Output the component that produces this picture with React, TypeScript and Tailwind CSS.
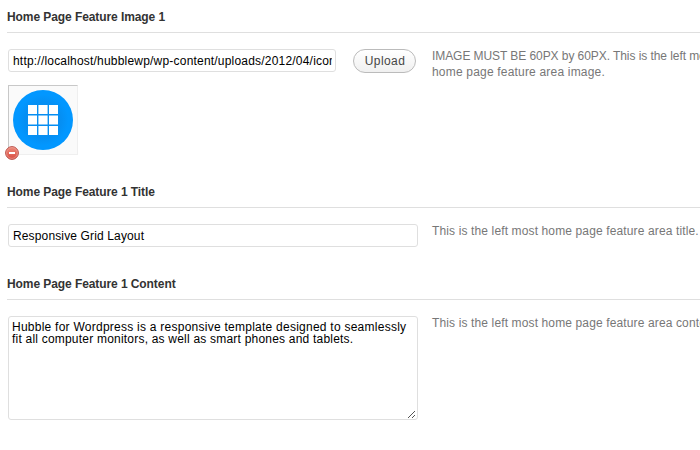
import type { ReactNode } from 'react';

function Section({ title, className, children }: { title: string; className: string; children: ReactNode }) {
  return (
    <section className={className}>
      <h3 className="ml-[7px] h-[33px] border-b border-[#dfdfdf] pt-[9px] text-[12px] leading-4 font-bold tracking-[-0.08px] text-[#333]">
        {title}
      </h3>
      <div className="flex pt-4 pl-2">{children}</div>
    </section>
  );
}

function Note({ children }: { children: ReactNode }) {
  return (
    <p className="-mt-px ml-[14px] shrink-0 text-[12px] leading-4 tracking-[0.13px] text-[#777]">{children}</p>
  );
}

function FeatureImage() {
  return (
    <div className="relative mt-3 h-[70px] w-[70px] border border-[#efefef] border-t-[#c8c8c8] border-l-[#c8c8c8] bg-[#fafafa] p-1">
      <svg width="60" height="60" viewBox="0 0 60 60" className="block">
        <defs>
          <radialGradient id="disc">
            <stop offset="0" stopColor="#078df0" />
            <stop offset="0.6" stopColor="#058ff3" />
            <stop offset="0.85" stopColor="#0297ff" />
          </radialGradient>
        </defs>
        <circle cx="30" cy="30" r="30" fill="url(#disc)" />
        <path
          d="M15 15h9v9h-9zM25.4 15h9.2v9h-9.2zM36 15h9v9h-9zM15 25.4h9v9.2h-9zM25.4 25.4h9.2v9.2h-9.2zM36 25.4h9v9.2h-9zM15 36h9v9h-9zM25.4 36h9.2v9h-9.2zM36 36h9v9h-9z"
          fill="#fff"
        />
      </svg>
      <svg width="14" height="14" viewBox="0 0 14 14" className="absolute -bottom-[6px] -left-[4px]">
        <defs>
          <linearGradient id="remove" x1="0" y1="0" x2="0" y2="1">
            <stop offset="0" stopColor="#ee8c7c" />
            <stop offset="1" stopColor="#d84a3f" />
          </linearGradient>
        </defs>
        <circle cx="7" cy="7" r="6.4" fill="url(#remove)" stroke="#b9544d" strokeWidth="1" />
        <circle cx="7" cy="7" r="5.4" fill="none" stroke="#f0a59b" strokeWidth="0.6" />
        <rect x="4" y="6" width="6" height="2" fill="#fff" />
      </svg>
    </div>
  );
}

export default function App() {
  return (
    <main className="h-[450px] w-[700px] overflow-hidden bg-white font-['Liberation_Sans',Arial,sans-serif] whitespace-nowrap">
      <Section title="Home Page Feature Image 1" className="h-[175px]">
        <div className="w-[410px] shrink-0">
          <div className="flex items-start justify-between pr-[2px]">
            <div className="h-[23px] w-[328px] rounded-[3px] border border-[#dfdfdf] px-1 text-[12px] leading-[22px] text-black">
              <div className="w-[319px] overflow-hidden tracking-[0.2px]">
                http://localhost/hubblewp/wp-content/uploads/2012/04/icon
              </div>
            </div>
            <button className="h-6 w-[63px] rounded-full border border-[#bbb] bg-linear-to-b from-white to-[#f0f0f0] pl-px text-[12px] leading-[22px] tracking-[0.4px] text-[#464646]">
              Upload
            </button>
          </div>
          <FeatureImage />
        </div>
        <Note>
          <span className="tracking-[-0.07px]">IMAGE MUST BE 60PX by 60PX. This is the left most</span>
          <br />
          <span className="tracking-[0.19px]">home page feature area image.</span>
        </Note>
      </Section>
      <Section title="Home Page Feature 1 Title" className="h-[92px]">
        <div className="h-[23px] w-[410px] shrink-0 rounded-[3px] border border-[#dfdfdf] px-1 text-[12px] leading-[22px] tracking-[0.14px] text-black">
          Responsive Grid Layout
        </div>
        <Note>This is the left most home page feature area title.</Note>
      </Section>
      <Section title="Home Page Feature 1 Content" className="h-[183px]">
        <div className="relative h-[104px] w-[410px] shrink-0 rounded-[3px] border border-[#dfdfdf] px-[3px] pt-1 text-[12px] leading-3 text-black">
          <span className="tracking-[0.25px]">Hubble for Wordpress is a responsive template designed to seamlessly</span>
          <br />
          <span className="tracking-[0.21px]">fit all computer monitors, as well as smart phones and tablets.</span>
          <svg width="8" height="8" viewBox="0 0 8 8" className="absolute right-[1px] bottom-[1px]" shapeRendering="crispEdges">
            <path
              d="M0 7h1v1h-1zM1 6h1v1h-1zM2 5h1v1h-1zM3 4h1v1h-1zM4 3h1v1h-1zM5 2h1v1h-1zM6 1h1v1h-1zM4 7h1v1h-1zM5 6h1v1h-1zM6 5h1v1h-1z"
              fill="#555"
            />
          </svg>
        </div>
        <Note>This is the left most home page feature area content.</Note>
      </Section>
    </main>
  );
}
